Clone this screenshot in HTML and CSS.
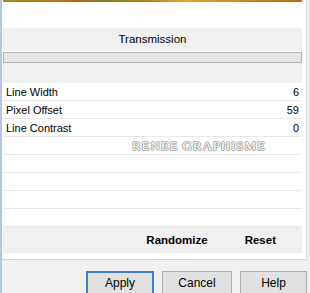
FILE: index.html
```html
<!DOCTYPE html>
<html lang="en">

<head>
    <meta charset="UTF-8" />
    <title>Transmission</title>
    <link rel="stylesheet" href="styles.css">
</head>

<body>
    <div class="window">
        <div class="sheet">
            <div class="preview-strip"></div>
            <div class="preview-gap"></div>

            <div class="section-title">Transmission</div>
            <div class="track"></div>
            <div class="track-gap"></div>

            <div class="rows">
                <div class="row"><span>Line Width</span><span>6</span></div>
                <div class="row"><span>Pixel Offset</span><span>59</span></div>
                <div class="row"><span>Line Contrast</span><span>0</span></div>
                <div class="row watermark-row"><span class="watermark">RENEE GRAPHISME</span></div>
                <div class="row"></div>
                <div class="row"></div>
                <div class="row"></div>
                <div class="row"></div>
            </div>

            <div class="tools">
                <span class="tool">Randomize</span>
                <span class="tool">Reset</span>
            </div>
        </div>

        <div class="actions">
            <button class="default">Apply</button>
            <button>Cancel</button>
            <button>Help</button>
        </div>
    </div>
</body>

</html>
```

FILE: styles.css
```css
html,
body {
    margin: 0;
    padding: 0;
}

body {
    width: 310px;
    height: 293px;
    overflow: hidden;
    background: #f0f0f0;
    font-family: "Liberation Sans", Arial, sans-serif;
    color: #000;
}

.window {
    height: 293px;
    box-sizing: border-box;
    border-left: 2px solid #b3c6de;
    display: flex;
    flex-direction: column;
}

.sheet {
    width: 305px;
    box-sizing: border-box;
    background: #fff;
    padding: 0 4px 6px 1px;
    border-right: 1px solid #dadada;
    border-bottom: 1px solid #d3d3d3;
}

.preview-strip {
    height: 2px;
    background: linear-gradient(to right,
            #9c8c22 0%,
            #b07a1c 15%,
            #c2621c 24%,
            #86801e 34%,
            #a8841a 48%,
            #e2a232 60%,
            #d48a20 78%,
            #b86a10 100%);
}

.preview-gap {
    height: 26px;
}

.section-title {
    height: 23px;
    line-height: 23px;
    background: #f0f0f0;
    text-align: center;
    font-size: 11.5px;
}

.track {
    height: 11px;
    margin-top: 1px;
    box-sizing: border-box;
    background: #e6e6e6;
    border: 1px solid #b4b4b4;
}

.track-gap {
    height: 20px;
    background: #f0f0f0;
}

.row {
    height: 18px;
    box-sizing: border-box;
    border-bottom: 1px solid #e8e8e8;
    padding: 0 3px;
    display: flex;
    justify-content: space-between;
    align-items: center;
    font-size: 11px;
}

.watermark-row {
    justify-content: flex-start;
    padding-left: 129px;
}

.watermark {
    font-family: "Liberation Serif", "Times New Roman", serif;
    font-size: 13px;
    letter-spacing: 0.9px;
    color: #fff;
    text-shadow: 1px 0 0 #a0a0a0, -1px 0 0 #a0a0a0, 0 1px 0 #a0a0a0, 0 -1px 0 #a0a0a0;
}

.tools {
    height: 26px;
    background: #f0f0f0;
    display: flex;
    justify-content: flex-end;
    align-items: center;
    gap: 37px;
    padding-right: 26px;
}

.tool {
    font-weight: bold;
    font-size: 11.5px;
}

.actions {
    display: flex;
    justify-content: flex-end;
    gap: 8px;
    padding: 11px 3px 0 0;
}

.actions button {
    width: 69px;
    height: 24px;
    box-sizing: border-box;
    background: #e1e1e1;
    border: 1px solid #adadad;
    font-family: "Liberation Sans", Arial, sans-serif;
    font-size: 12px;
    padding: 0;
    color: #000;
}

.actions .default {
    width: 68px;
    border: 2px solid #3d83c4;
}

.actions button:nth-child(2) {
    width: 70px;
}

.actions button:nth-child(3) {
    width: 67px;
}
```
